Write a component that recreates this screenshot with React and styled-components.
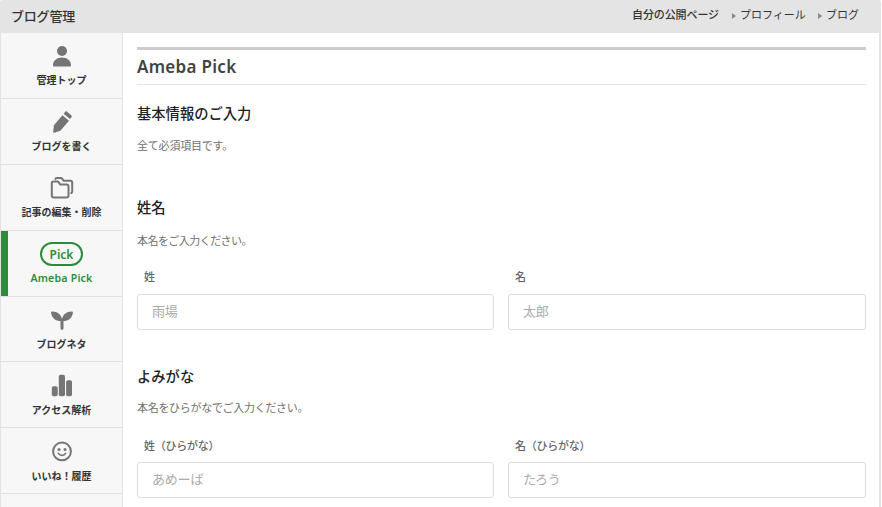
import React from "react";
import styled, { createGlobalStyle } from "styled-components";

const GlobalStyle = createGlobalStyle`
  * { box-sizing: border-box; }
  body { margin: 0; background: #fff; overflow: hidden; font-family: "Noto Sans CJK JP", sans-serif; color: #333; }
  h1, h2, p { margin: 0; }
`;

const Page = styled.div`
  width: 882px;
  height: 507px;
  display: flex;
  flex-direction: column;
  padding-right: 1px;
  overflow: hidden;
`;

const Header = styled.header`
  height: 33px;
  flex: none;
  display: flex;
  justify-content: space-between;
  background: #e4e4e4;
  border-radius: 2px 3px 0 0;
  padding: 0 21px 0 11px;
  white-space: nowrap;
`;

const Brand = styled.div`
  font-size: 13px;
  font-weight: 500;
  line-height: 32px;
  letter-spacing: -0.2px;
`;

const HeaderNav = styled.nav`
  display: flex;
  width: 228px;
  height: 28px;
  font-size: 11px;
  line-height: 28px;
`;

const PublicLabel = styled.span`
  width: 100px;
  font-weight: 500;
  letter-spacing: -0.1px;
`;

const HeaderLink = styled.a`
  display: flex;
  align-items: center;
  width: ${(p) => p.$width}px;
  &::before {
    content: "";
    margin: 3px 4px 0 0;
    border-left: 4px solid #888;
    border-top: 3px solid transparent;
    border-bottom: 3px solid transparent;
  }
`;

const Body = styled.div`
  display: flex;
  flex: 1;
  min-height: 0;
  border-left: 1px solid #e2e2e2;
  border-right: 2px solid #e4e4e4;
`;

const Sidebar = styled.nav`
  width: 122px;
  flex: none;
  background: #f7f7f7;
  border-right: 1px solid #e2e2e2;
  overflow: hidden;
`;

const MenuItem = styled.a`
  height: ${(p) => (p.$short ? 65 : 66)}px;
  display: flex;
  flex-direction: column;
  align-items: center;
  padding-top: 11px;
  border-bottom: 1px solid #e0e0e0;
  color: ${(p) => (p.$active ? "#2d8c3c" : "#333")};
  box-shadow: ${(p) => (p.$active ? "inset 7px 0 #2d8c3c" : "none")};
`;

const MenuIcon = styled.svg`
  width: 24px;
  height: 24px;
  flex: none;
  color: #757575;
`;

const PickBadge = styled.span`
  width: 43px;
  height: 24px;
  flex: none;
  border: 2px solid #2d8c3c;
  border-radius: 12px;
  font: 600 12px/21px "Noto Sans", sans-serif;
  text-align: center;
`;

const MenuLabel = styled.span`
  margin-top: ${(p) => (p.$low ? 5 : 4)}px;
  height: 16px;
  white-space: nowrap;
  font-family: "Noto Sans", "Noto Sans CJK JP", sans-serif;
  font-size: ${(p) => (p.$active ? 10.6 : 10)}px;
  font-weight: ${(p) => (p.$active ? 600 : 700)};
  letter-spacing: ${(p) => (p.$active ? 0.2 : 0)}px;
  line-height: 16px;
`;

const Main = styled.main`
  flex: 1;
  padding: 14px 13px 0 14px;
`;

const Title = styled.h1`
  height: 38px;
  border-top: 3px solid #ccc;
  border-bottom: 1px solid #e5e5e5;
  font: 600 17px/33px "Noto Sans", sans-serif;
  letter-spacing: 0.3px;
  color: #444;
`;

const Section = styled.section`
  padding-top: ${(p) => p.$top}px;
`;

const Heading = styled.h2`
  height: 20px;
  font-size: 14.3px;
  font-weight: 500;
  line-height: 19px;
  color: #222;
`;

const Note = styled.p`
  height: 16px;
  margin-top: ${(p) => p.$gap}px;
  font-size: 11px;
  line-height: ${(p) => p.$line || 16}px;
  letter-spacing: ${(p) => p.$track || 0}px;
  color: #707070;
`;

const Fields = styled.div`
  display: grid;
  grid-template-columns: 357px 358px;
  column-gap: 14px;
  margin-top: ${(p) => p.$gap}px;
`;

const Field = styled.label`
  display: flex;
  flex-direction: column;
`;

const FieldLabel = styled.span`
  height: 16px;
  margin-bottom: ${(p) => p.$gap}px;
  padding-left: 7px;
  font-size: 11px;
  font-weight: 500;
  line-height: 15px;
  letter-spacing: -0.25px;
  font-feature-settings: "halt" 0;
  color: #666;
`;

const Input = styled.input`
  width: 100%;
  height: 36px;
  padding: 0 14px 3px;
  border: 1px solid #ddd;
  border-radius: 3px;
  background: #fff;
  font: 400 13px "Noto Sans CJK JP", sans-serif;
  letter-spacing: -0.2px;
  outline: none;
  &::placeholder { color: #aaa; opacity: 1; }
`;

const icons = {
  user: (
    <g fill="currentColor">
      <circle cx="12" cy="7" r="5" />
      <path d="M3 21.2C3 16.5 7 13.4 12 13.4s9 3.1 9 7.8c0 .8-.4 1.3-1.2 1.3H4.2c-.8 0-1.2-.5-1.2-1.3Z" />
    </g>
  ),
  pencil: (
    <g fill="currentColor">
      <path d="m12.4 5.2 6.6 5.5-8.6 10.1-6.1 2c-.8.2-1.2-.1-1.1-.9l.7-6.6Z" />
      <path d="m13.6 3.7 1.7-2c.4-.5 1-.5 1.5-.1l4.7 3.9c.5.4.5 1 .1 1.5l-1.6 2Z" />
    </g>
  ),
  folders: (
    <g fill="none" stroke="currentColor" strokeWidth="2" strokeLinejoin="round" strokeLinecap="round">
      <path d="M1.8 7.4c0-1.2.6-1.8 1.8-1.8h3.7c.7 0 1.1.2 1.5.8l1.5 2.2h6.4c1.2 0 1.8.6 1.8 1.8V19.6c0 1.2-.6 1.8-1.8 1.8H3.6c-1.2 0-1.8-.6-1.8-1.8Z" />
      <path d="M5.4 2.9c.3-.6.8-.8 1.6-.8h3.8c.7 0 1.1.2 1.5.8l1.2 1.8h6.9c1.2 0 1.8.6 1.8 1.8v8.9c0 .8-.3 1.3-.9 1.6" />
    </g>
  ),
  sprout: (
    <g fill="currentColor">
      <path d="M12 11.2C11.4 6.5 7.3 3.3 2.2 3.4c-.9 0-1.3.6-1.1 1.5.9 5.4 5 8.6 10.9 8.1 5.9.5 10-2.7 10.9-8.1.2-.9-.2-1.5-1.1-1.5C16.7 3.3 12.6 6.5 12 11.2Z" />
      <rect x="10.5" y="10.5" width="3" height="11.2" rx="1.1" />
    </g>
  ),
  chart: (
    <g fill="currentColor">
      <rect x="1.8" y="13.2" width="5.9" height="10.1" rx="1.8" />
      <rect x="8.8" y="1.8" width="6.2" height="21.5" rx="1.8" />
      <rect x="16.1" y="7.2" width="5.9" height="16.1" rx="1.8" />
    </g>
  ),
  smile: (
    <g fill="none" stroke="currentColor" strokeWidth="2" strokeLinecap="round">
      <circle cx="12" cy="12.4" r="8.9" />
      <circle cx="9" cy="10.4" r="1.5" fill="currentColor" stroke="none" />
      <circle cx="15" cy="10.4" r="1.5" fill="currentColor" stroke="none" />
      <path d="M8.4 14.4c1.5 2.6 5.7 2.6 7.2 0" strokeWidth="1.7" />
    </g>
  ),
};

const menu = [
  { label: "管理トップ", icon: "user" },
  { label: "ブログを書く", icon: "pencil" },
  { label: "記事の編集・削除", icon: "folders" },
  { label: "Ameba Pick", active: true },
  { label: "ブログネタ", icon: "sprout", short: true },
  { label: "アクセス解析", icon: "chart", low: true },
  { label: "いいね！履歴", icon: "smile", low: true },
];

function NameFields({ gap, labelGap, items }) {
  return (
    <Fields $gap={gap}>
      {items.map(([label, placeholder]) => (
        <Field key={label}>
          <FieldLabel $gap={labelGap}>{label}</FieldLabel>
          <Input placeholder={placeholder} />
        </Field>
      ))}
    </Fields>
  );
}

export default function App() {
  return (
    <Page>
      <GlobalStyle />
      <Header>
        <Brand>ブログ管理</Brand>
        <HeaderNav>
          <PublicLabel>自分の公開ページ</PublicLabel>
          <HeaderLink $width={86}>プロフィール</HeaderLink>
          <HeaderLink $width={42}>ブログ</HeaderLink>
        </HeaderNav>
      </Header>
      <Body>
        <Sidebar>
          {menu.map((m) => (
            <MenuItem key={m.label} $active={m.active} $short={m.short}>
              {m.active ? <PickBadge>Pick</PickBadge> : <MenuIcon viewBox="0 0 24 24">{icons[m.icon]}</MenuIcon>}
              <MenuLabel $active={m.active} $low={m.low}>{m.label}</MenuLabel>
            </MenuItem>
          ))}
        </Sidebar>
        <Main>
          <Title>Ameba Pick</Title>
          <Section $top={18}>
            <Heading>基本情報のご入力</Heading>
            <Note $gap={14} $track={-0.2}>全て必須項目です。</Note>
          </Section>
          <Section $top={44}>
            <Heading>姓名</Heading>
            <Note $gap={15} $track={-0.55}>本名をご入力ください。</Note>
            <NameFields gap={21} labelGap={9} items={[["姓", "雨場"], ["名", "太郎"]]} />
          </Section>
          <Section $top={36}>
            <Heading>よみがな</Heading>
            <Note $gap={14} $line={15} $track={-0.3}>本名をひらがなでご入力ください。</Note>
            <NameFields gap={22} labelGap={8} items={[["姓（ひらがな）", "あめーば"], ["名（ひらがな）", "たろう"]]} />
          </Section>
        </Main>
      </Body>
    </Page>
  );
}
